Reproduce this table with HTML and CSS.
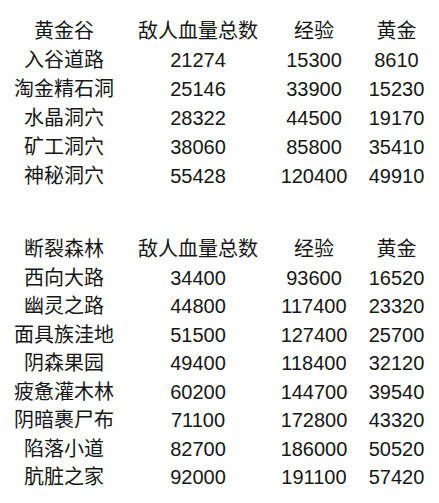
FILE: index.html
```html
<!DOCTYPE html>
<html lang="zh">
<head>
<meta charset="utf-8">
<link rel="stylesheet" href="styles.css">
</head>
<body>
<div class="page">
  <div class="table t1">
    <div class="cell">黄金谷</div><div class="cell">敌人血量总数</div><div class="cell">经验</div><div class="cell">黄金</div>
    <div class="cell">入谷道路</div><div class="cell">21274</div><div class="cell">15300</div><div class="cell">8610</div>
    <div class="cell">淘金精石洞</div><div class="cell">25146</div><div class="cell">33900</div><div class="cell">15230</div>
    <div class="cell">水晶洞穴</div><div class="cell">28322</div><div class="cell">44500</div><div class="cell">19170</div>
    <div class="cell">矿工洞穴</div><div class="cell">38060</div><div class="cell">85800</div><div class="cell">35410</div>
    <div class="cell">神秘洞穴</div><div class="cell">55428</div><div class="cell">120400</div><div class="cell">49910</div>
  </div>
  <div class="table t2">
    <div class="cell">断裂森林</div><div class="cell">敌人血量总数</div><div class="cell">经验</div><div class="cell">黄金</div>
    <div class="cell">西向大路</div><div class="cell">34400</div><div class="cell">93600</div><div class="cell">16520</div>
    <div class="cell">幽灵之路</div><div class="cell">44800</div><div class="cell">117400</div><div class="cell">23320</div>
    <div class="cell">面具族洼地</div><div class="cell">51500</div><div class="cell">127400</div><div class="cell">25700</div>
    <div class="cell">阴森果园</div><div class="cell">49400</div><div class="cell">118400</div><div class="cell">32120</div>
    <div class="cell">疲惫灌木林</div><div class="cell">60200</div><div class="cell">144700</div><div class="cell">39540</div>
    <div class="cell">阴暗裹尸布</div><div class="cell">71100</div><div class="cell">172800</div><div class="cell">43320</div>
    <div class="cell">陷落小道</div><div class="cell">82700</div><div class="cell">186000</div><div class="cell">50520</div>
    <div class="cell">肮脏之家</div><div class="cell">92000</div><div class="cell">191100</div><div class="cell">57420</div>
  </div>
</div>
</body>
</html>
```
FILE: styles.css
```css
html, body {
  margin: 0;
  padding: 0;
  background: #ffffff;
}
.page {
  padding: 17px 0 0 2px;
  display: flex;
  flex-direction: column;
  gap: 44px;
  font-family: "Liberation Sans", "Noto Sans CJK SC", sans-serif;
  font-size: 20px;
  color: #161616;
}
.table {
  display: grid;
  grid-template-columns: 124px 144px 88px 77px;
}
.t1 .cell {
  line-height: 29px;
}
.t2 .cell {
  line-height: 28.5px;
}
.cell {
  text-align: center;
  white-space: nowrap;
}
```
